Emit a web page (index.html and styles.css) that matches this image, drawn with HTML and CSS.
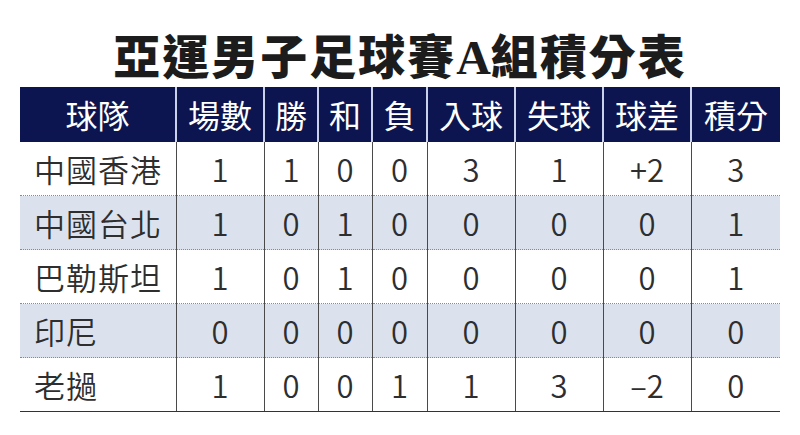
FILE: index.html
```html
<!DOCTYPE html>
<html lang="zh-Hant">
<head>
<meta charset="utf-8">
<link rel="stylesheet" href="styles.css">
</head>
<body>
<div class="page">
  <h1 class="title">亞運男子足球賽<span class="latin">A</span>組積分表</h1>
  <table class="standings">
    <colgroup>
      <col class="c-team"><col class="c-w88"><col class="c-w54"><col class="c-w54"><col class="c-w55"><col class="c-w88"><col class="c-w88"><col class="c-w88"><col class="c-w89">
    </colgroup>
    <thead>
      <tr><th>球隊</th><th>場數</th><th>勝</th><th>和</th><th>負</th><th>入球</th><th>失球</th><th>球差</th><th>積分</th></tr>
    </thead>
    <tbody>
      <tr><td class="team">中國香港</td><td>1</td><td>1</td><td>0</td><td>0</td><td>3</td><td>1</td><td>+2</td><td>3</td></tr>
      <tr class="band"><td class="team">中國台北</td><td>1</td><td>0</td><td>1</td><td>0</td><td>0</td><td>0</td><td>0</td><td>1</td></tr>
      <tr><td class="team">巴勒斯坦</td><td>1</td><td>0</td><td>1</td><td>0</td><td>0</td><td>0</td><td>0</td><td>1</td></tr>
      <tr class="band"><td class="team">印尼</td><td>0</td><td>0</td><td>0</td><td>0</td><td>0</td><td>0</td><td>0</td><td>0</td></tr>
      <tr class="last"><td class="team">老撾</td><td>1</td><td>0</td><td>0</td><td>1</td><td>1</td><td>3</td><td>–2</td><td>0</td></tr>
    </tbody>
  </table>
</div>
</body>
</html>
```
FILE: styles.css
```css
html, body {
  margin: 0;
  padding: 0;
  background: #ffffff;
}
.page {
  width: 800px;
  height: 435px;
  padding: 0 20px;
  box-sizing: border-box;
  font-family: "Noto Sans CJK TC", "Noto Sans", sans-serif;
}
.title {
  margin: 0;
  height: 87px;
  padding-top: 26px;
  box-sizing: border-box;
  text-align: center;
  font-family: "Noto Sans CJK TC", sans-serif;
  font-weight: 900;
  font-size: 47px;
  line-height: 56px;
  letter-spacing: 2px;
  color: #1c1c1c;
}
.title .latin {
  font-family: "Liberation Serif", serif;
  font-weight: 700;
  font-size: 48px;
  letter-spacing: 0;
}
.standings {
  width: 760px;
  border-collapse: collapse;
  table-layout: fixed;
}
.c-team { width: 156px; }
.c-w88 { width: 88px; }
.c-w54 { width: 54px; }
.c-w55 { width: 55px; }
.c-w89 { width: 89px; }
.standings th {
  height: 55px;
  padding: 0;
  background: #0d1551;
  color: #ffffff;
  font-weight: 400;
  font-size: 32px;
  line-height: 55px;
  text-align: center;
  border-left: 2px solid #c9d2ea;
}
.standings th:first-child {
  border-left: none;
}
.standings td {
  height: 53px;
  padding: 0;
  font-weight: 350;
  font-size: 31px;
  line-height: 53px;
  color: #2e2e2e;
  text-align: center;
  border-left: 1px solid #4a4a4a;
  border-bottom: 1px dotted #8a8a8a;
}
.standings td:first-child {
  border-left: none;
}
.standings td.team {
  text-align: left;
  padding-left: 14px;
  letter-spacing: 1px;
}
.standings tr.band td {
  background: #dbe2ee;
}
.standings tr.last td {
  border-bottom: 1px solid #333333;
}
```
